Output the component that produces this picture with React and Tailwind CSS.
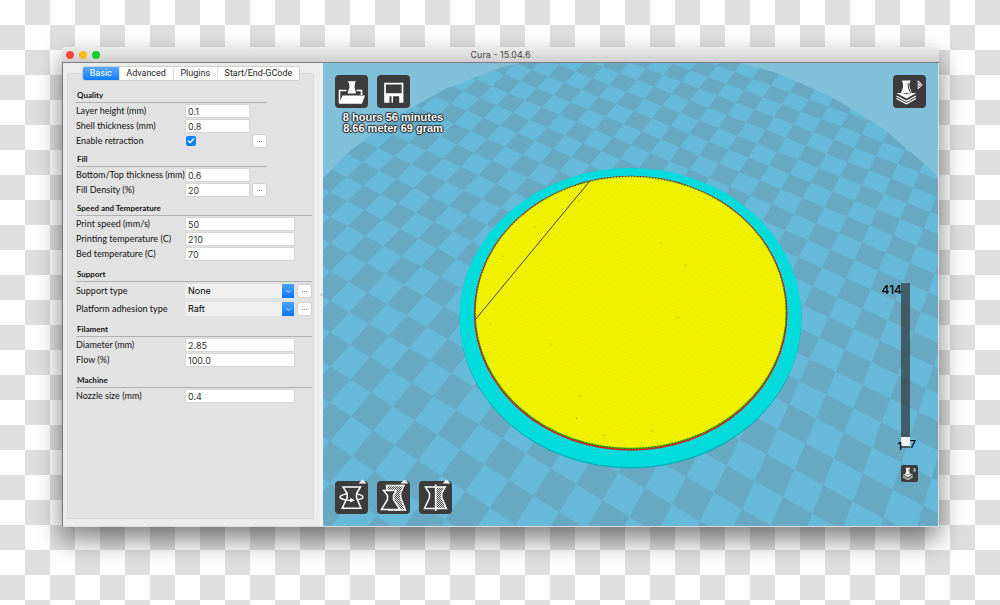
import { useState } from 'react'
import { ChevronDown, Check } from 'lucide-react'

const TABS = ['Basic', 'Advanced', 'Plugins', 'Start/End-GCode']

const SECTIONS = [
  {
    title: 'Quality',
    className: 'mt-2 w-[191px]',
    rows: [
      { id: 'layer-height', label: 'Layer height (mm)', value: '0.1' },
      { id: 'shell', label: 'Shell thickness (mm)', value: '0.8' },
      { id: 'retraction', label: 'Enable retraction', type: 'check', more: true },
    ],
  },
  {
    title: 'Fill',
    className: 'mt-1 w-[191px]',
    rows: [
      { id: 'bottom-top', label: 'Bottom/Top thickness (mm)', value: '0.6' },
      { id: 'density', label: 'Fill Density (%)', value: '20', more: true },
    ],
  },
  {
    title: 'Speed and Temperature',
    className: 'mt-1',
    wide: true,
    rows: [
      { id: 'speed', label: 'Print speed (mm/s)', value: '50' },
      { id: 'temp', label: 'Printing temperature (C)', value: '210' },
      { id: 'bed', label: 'Bed temperature (C)', value: '70' },
    ],
  },
  {
    title: 'Support',
    className: 'mt-1.5',
    wide: true,
    loose: true,
    rows: [
      { id: 'support', label: 'Support type', type: 'select', options: ['None', 'Touching buildplate', 'Everywhere'], more: true },
      { id: 'adhesion', label: 'Platform adhesion type', type: 'select', options: ['Raft', 'Brim', 'None'], more: true },
    ],
  },
  {
    title: 'Filament',
    className: 'mt-1.5',
    wide: true,
    rows: [
      { id: 'diameter', label: 'Diameter (mm)', value: '2.85' },
      { id: 'flow', label: 'Flow (%)', value: '100.0' },
    ],
  },
  {
    title: 'Machine',
    className: 'mt-1.5',
    wide: true,
    rows: [{ id: 'nozzle', label: 'Nozzle size (mm)', value: '0.4' }],
  },
]

// Camera for the build plate: 30 degree pitch and yaw, 45 degree field of view
const FOCAL = 559
const DISTANCE = 3.305
const CELL = 0.1513
const PLATE_CELLS = 15
const SIN = Math.sin(Math.PI / 6)
const COS = Math.cos(Math.PI / 6)

function project(u, v) {
  const x = (u * COS + v * SIN) * CELL
  const y = (-u * SIN + v * COS) * CELL - 0.014
  const depth = DISTANCE + y * SIN
  return `${(307.5 + (FOCAL * x) / depth).toFixed(1)},${(231.5 - (FOCAL * y * COS) / depth).toFixed(1)}`
}

const plateEdge = Array.from({ length: 32 }, (_, i) => {
  const a = (i / 32) * Math.PI * 2
  return project(Math.cos(a) * PLATE_CELLS, Math.sin(a) * PLATE_CELLS)
}).join(' ')

const darkCells = []
for (let u = -PLATE_CELLS; u < PLATE_CELLS; u++) {
  for (let v = -PLATE_CELLS; v < PLATE_CELLS; v++) {
    if ((u + v) % 2 !== 0) {
      darkCells.push(`M${project(u, v)}L${project(u + 1, v)}L${project(u + 1, v + 1)}L${project(u, v + 1)}Z`)
    }
  }
}

function BuildPlate() {
  return (
    <svg className="absolute inset-0 w-full h-full" viewBox="0 0 615 463" preserveAspectRatio="xMidYMid slice" aria-hidden="true">
      <defs>
        <clipPath id="plate">
          <polygon points={plateEdge} />
        </clipPath>
        <pattern id="infill" width="3" height="3" patternUnits="userSpaceOnUse" patternTransform="rotate(20)">
          <rect width="3" height="3" fill="#f4f400" />
          <rect width="3" height="1" fill="#ebeb00" />
        </pattern>
      </defs>
      <polygon points={plateEdge} fill="#67b9da" />
      <path d={darkCells.join('')} fill="#67a8c3" clipPath="url(#plate)" />

      {/* raft */}
      <ellipse cx="307.5" cy="255.5" rx="171" ry="150" fill="#00b4b8" />
      <ellipse cx="307.5" cy="254.5" rx="171" ry="149.5" fill="#00dbdc" />

      {/* model */}
      <ellipse cx="307.7" cy="250.2" rx="156.8" ry="137.5" fill="#e01818" />
      <ellipse cx="307.7" cy="249.7" rx="155.7" ry="136.5" fill="#2fc800" />
      <ellipse cx="307.7" cy="249.2" rx="155" ry="135.6" fill="url(#infill)" />
      <ellipse cx="307.7" cy="249.6" rx="155.4" ry="135.8" fill="none" stroke="#30308a" strokeWidth="1" strokeDasharray="1 2" />
      <path d="M266 119 L152 257" stroke="#3f3f6a" strokeWidth="1" />
      <path d="M255.500 138h1M211.500 164h1M179.500 193h1M337.500 180h1M362 202h1M354.500 254.500h1M227.500 281h1M167 261h1M256.500 333.500h1M253 355.500h1M280.500 372.500h1M329 368h1" stroke="#5c9a00" />
    </svg>
  )
}

function ToolButton({ label, className = '', children }) {
  return (
    <button type="button" aria-label={label} className={`size-[33px] rounded bg-[#3c3c3c] text-white ${className}`}>
      <svg viewBox="0 0 33 33" className="size-full overflow-visible" fill="none" stroke="currentColor" strokeWidth="1.3">
        {children}
      </svg>
    </button>
  )
}

const MenuTip = () => <path d="M23.500 2.500h8L27.500 -1.500z" fill="currentColor" stroke="none" />

const Hatch = () => (
  <defs>
    <pattern id="hatch" width="2" height="2" patternUnits="userSpaceOnUse">
      <g stroke="none">
        <rect width="2" height="2" fill="#4a4a4a" />
        <rect width="1" height="1" fill="#e0e0e0" />
        <rect x="1" y="1" width="1" height="1" fill="#e0e0e0" />
      </g>
    </pattern>
  </defs>
)

const LayersGlyph = () => (
  <>
    <path d="M9 5.500h8.500l-1.200 3.500.4 3.500 2 5.500H8l2-5.500V9z" fill="currentColor" stroke="none" />
    <path d="M15 8l.5 5 2.200 5" stroke="#3c3c3c" strokeWidth="1" />
    <path d="M3.500 18h5l5 1 5-1h4.700l-9.700 5.500z" fill="currentColor" stroke="none" />
    <path d="M3.500 21l10 5.300 9.500-5.300M3.500 23.500l10 5.300 9.500-5.300" />
    <path d="M25.200 5.800v8l4-4z" strokeWidth="1" />
    <path d="M26.200 8l2 1.800-2 1.800z" fill="currentColor" stroke="none" />
  </>
)

function MoreButton({ label }) {
  return (
    <button
      type="button"
      aria-label={`${label} settings`}
      className="ml-auto flex h-3.5 w-[15px] items-center justify-center rounded-[3px] border border-[#cfcfcf] bg-white"
    >
      <span className="flex gap-px">
        <i className="size-px bg-[#888]" />
        <i className="size-px bg-[#888]" />
        <i className="size-px bg-[#888]" />
      </span>
    </button>
  )
}

function Control({ row, wide }) {
  if (row.type === 'check') {
    return (
      <span className="relative ml-px flex size-2.5">
        <input id={row.id} type="checkbox" defaultChecked className="size-2.5 appearance-none rounded-xs bg-white checked:bg-[#0a84ff]" />
        <Check size={8} strokeWidth={4} className="pointer-events-none absolute left-px top-px text-white" />
      </span>
    )
  }
  if (row.type === 'select') {
    return (
      <span className="relative flex w-[109px]">
        <select id={row.id} className="h-3.5 w-full appearance-none bg-[#efefef] pl-[3px] pr-4 leading-[14px] text-black">
          {row.options.map((o) => <option key={o}>{o}</option>)}
        </select>
        <span className="pointer-events-none absolute inset-y-0 right-0 flex w-3 items-center justify-center bg-linear-to-b from-[#4aa5ff] to-[#0a72f5] text-white">
          <ChevronDown size={7} strokeWidth={3} />
        </span>
      </span>
    )
  }
  return (
    <input
      id={row.id}
      type="text"
      defaultValue={row.value}
      className={`h-3.5 border border-[#d6d6d6] bg-white pl-0.5 text-[#333] ${wide ? 'w-[110px]' : 'w-[65px]'}`}
    />
  )
}

function Section({ title, className, wide, loose, rows }) {
  return (
    <fieldset className={className}>
      <legend className="float-left flex h-[15px] w-full items-center border-b border-[#b0b0b0] pl-px text-[8px] font-bold text-[#111]">
        {title}
      </legend>
      <div className={`clear-both flex flex-col ${loose ? 'gap-1 pt-0.5' : 'gap-px pt-px'}`}>
        {rows.map((row) => (
          <div key={row.id} className="flex h-3.5 items-center font-['Inter',sans-serif]">
            <label htmlFor={row.id} className="w-[109px] shrink-0 whitespace-nowrap font-['Lato',sans-serif] text-[#111]">{row.label}</label>
            <Control row={row} wide={wide} />
            {row.more && <MoreButton label={row.label} />}
          </div>
        ))}
      </div>
    </fieldset>
  )
}

function SettingsPanel() {
  const [tab, setTab] = useState('Basic')

  return (
    <aside className="flex w-[257px] shrink-0 flex-col bg-[#ececec] pb-[7px] pl-1 pr-[6px] pt-2.5">
      <div className="flex-1 rounded-xs border border-[#d8d8d8] bg-[#e2e2e2]">
        <div role="tablist" className="-mt-[7px] ml-[15px] flex h-[13px] w-[216px] overflow-hidden rounded-xs bg-white font-['Roboto',sans-serif] shadow-[0_0_1px_1px_#cfcfcf]">
          {TABS.map((name) => (
            <button
              key={name}
              type="button"
              role="tab"
              aria-selected={tab === name}
              onClick={() => setTab(name)}
              className={`flex-auto border-r border-[#e2e2e2] px-1 leading-[13px] last:border-0
                          ${tab === name ? 'bg-linear-to-b from-[#55a9ff] to-[#0a7bff] text-white' : 'text-[#222]'}`}
            >
              {name}
            </button>
          ))}
        </div>
        <div className="pl-2 pr-px font-['Lato',sans-serif]">
          {SECTIONS.map((s) => <Section key={s.title} {...s} />)}
        </div>
      </div>
    </aside>
  )
}

function Viewport() {
  return (
    <main className="relative flex-1 overflow-hidden bg-[#80c0d8]">
      <BuildPlate />

      <div className="absolute left-3 top-3 flex flex-col">
        <div className="flex gap-[9px]">
          <ToolButton label="Load file">
            <path d="M4.500 28V15.500h7M21.500 15.500h5V20" strokeWidth="1.600" />
            <path d="M12.500 6.300h8.500l-1 1.700-.5 4 1.500 6.500h-8.500l2-6.500-.5-4z" fill="currentColor" stroke="none" />
            <path d="M7.500 20.500h22.500l-3 8.300H4z" fill="currentColor" stroke="none" />
          </ToolButton>
          <ToolButton label="Save toolpath">
            <path d="M8 8.700h17.500V19H8z" strokeWidth="1.700" />
            <path d="M7.200 19h19.200v8.800h-4.200v-6.500H16v6.500h-1.500v-6.500h-2v6.500H7.200z" fill="currentColor" stroke="none" />
          </ToolButton>
        </div>
        <p className="mt-1 w-[116px] whitespace-nowrap text-center font-['Liberation_Sans',sans-serif] text-[11px] font-bold leading-[11px] text-white [text-shadow:1px_0_1px_#222,-1px_0_1px_#222,0_1px_1px_#222,0_-1px_1px_#222]">
          8 hours 56 minutes
          <br />
          8.66 meter 69 gram
        </p>
      </div>

      <ToolButton label="View mode" className="absolute right-3 top-3">
        <LayersGlyph />
      </ToolButton>

      <div className="absolute bottom-3 left-3 flex gap-[9px]">
        <ToolButton label="Rotate">
          <ellipse cx="16.500" cy="16" rx="11.500" ry="3.500" />
          <path d="M8 6h17.500l-4 6.500v4L26 27.300H7.200l5-10.800v-4z" fill="#3c3c3c" strokeWidth="1.500" />
          <path d="M5 16c1 2.500 5 3.300 11 3.300" />
          <path d="M15 17l5 2.200-5 2.300z" fill="currentColor" stroke="none" />
          <MenuTip />
        </ToolButton>
        <ToolButton label="Scale">
          <Hatch />
          <path d="M9.500 4.500h17.500l-3.500 8 .5 5L28.500 29H12z" fill="url(#hatch)" strokeWidth="1.400" />
          <path d="M6.500 9.500h12.500l-2.500 5v4l6.500 10H4.500l6-10v-4z" fill="#3c3c3c" strokeWidth="1.500" />
          <MenuTip />
        </ToolButton>
        <ToolButton label="Mirror">
          <path d="M16.700 6h9.500l-3.500 6.500v4l4.800 11H16.700z" fill="url(#hatch)" stroke="none" />
          <path d="M6.500 6h19.700l-3.500 6.500v4l4.800 11H5.500l5-11v-4z" strokeWidth="1.500" />
          <path d="M16.700 3.500v26.500" strokeWidth="1.700" />
          <MenuTip />
        </ToolButton>
      </div>

      {/* Layer slider */}
      <div className="absolute bottom-[44px] right-5 flex w-9 flex-col font-['Inter',sans-serif] text-[11px] font-medium text-black">
        <div className="relative h-[165px]">
          <input
            type="range"
            min="1"
            max="414"
            defaultValue="7"
            aria-label="Layer"
            className="absolute right-2 top-0 m-0 h-[165px] w-[9px] appearance-none bg-[#2d2d2d]/65 [direction:rtl] [writing-mode:vertical-lr]
                       [&::-webkit-slider-thumb]:size-[9px] [&::-webkit-slider-thumb]:appearance-none [&::-webkit-slider-thumb]:bg-[#f4f4f4]"
          />
          <span className="absolute right-4 top-0 text-[12px] leading-[13px]">414</span>
          <span className="absolute bottom-[-5px] right-4 leading-[13px]">1</span>
          <span className="absolute bottom-[-3px] right-0.5 leading-[13px]">7</span>
        </div>
        <button type="button" aria-label="Layer view" className="ml-auto mt-[17px] size-[17px] rounded-xs bg-[#3c3c3c] text-white">
          <svg viewBox="0 0 33 33" className="size-full" fill="none" stroke="currentColor" strokeWidth="1.300">
            <LayersGlyph />
          </svg>
        </button>
      </div>
    </main>
  )
}

export default function App() {
  return (
    <div className="flex min-h-screen bg-[repeating-conic-gradient(#fff_0_25%,#dfdfdf_0_50%)] bg-[length:50px_50px] bg-[position:25px_0] pb-[78px] pl-[62px] pr-[61px] pt-[47px] font-['Inter',sans-serif] text-[9px] leading-3 text-[#222]">
      <div className="flex flex-1 flex-col overflow-hidden rounded-t shadow-[0_12px_26px_rgba(0,0,0,0.5)]">
        <header className="relative flex h-4 items-center justify-center border-b border-[#7d7d7d] bg-linear-to-b from-[#ebebeb] to-[#d0d0d0]">
          <div className="absolute left-1 flex gap-[5px]">
            <button type="button" aria-label="Close" className="size-2 rounded-full bg-[#fc4642]" />
            <button type="button" aria-label="Minimize" className="size-2 rounded-full bg-[#fdb817]" />
            <button type="button" aria-label="Zoom" className="size-2 rounded-full bg-[#0fce2b]" />
          </div>
          <h1 className="text-[#444]">Cura - 15.04.6</h1>
        </header>
        <div className="flex flex-1 border border-t-0 border-[#dcdcdc] border-l-[#777]">
          <SettingsPanel />
          <div className="flex w-[3px] items-center justify-center bg-[#f0f0f0]">
            <i className="size-[3px] rounded-full bg-[#cfcfcf]" />
          </div>
          <Viewport />
        </div>
      </div>
    </div>
  )
}
